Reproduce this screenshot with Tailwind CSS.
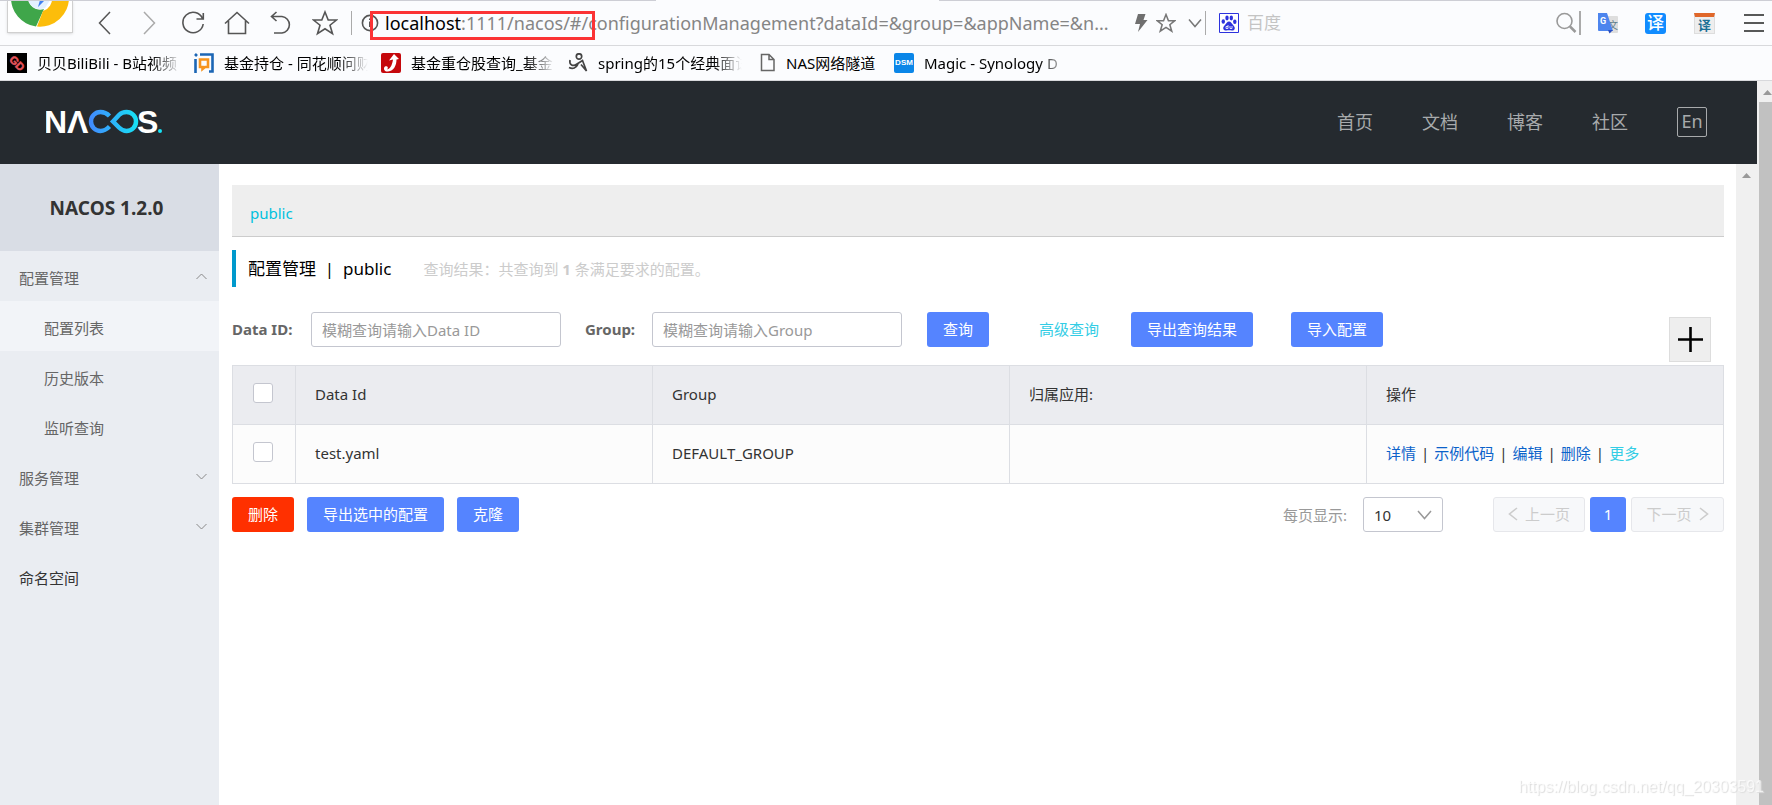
<!DOCTYPE html>
<html lang="zh-CN">
<head>
<meta charset="utf-8">
<title>Nacos</title>
<script src="https://cdn.jsdelivr.net/npm/@tailwindcss/browser@4"></script>
</head>
<body class="flex min-h-screen flex-col bg-white font-['Noto_Sans','Noto_Sans_CJK_SC',sans-serif] text-[15px] leading-5 text-[#333]">

<!-- Browser toolbar -->
<div class="relative flex h-[46px] shrink-0 items-center border-b border-[#d8d9dc] bg-[#fbfcfe] pt-px pr-2">
  <div class="absolute top-0 left-0 h-px w-[37%] bg-[#cdced5]"></div>
  <div class="absolute top-0 right-0 h-px w-[47%] bg-[#cdced5]"></div>
  <div class="ml-[7px] h-8 w-[66px] shrink-0 self-start border border-t-0 border-[#d0d0d0] bg-white shadow-sm">
    <svg class="mx-auto block" width="62" height="29" viewBox="0 0 62 29">
      <path d="M2 -4A29 29 0 0 0 27 25.500L35 8A12 12 0 0 1 19 -4Z" fill="#3fa64a"/>
      <path d="M28 25.500A29 29 0 0 0 60 -4H43A13 13 0 0 1 34 10Z" fill="#fcbd0b"/>
      <path d="M19 -4A12 12 0 0 0 36 7L43 -4Z" fill="#e4f1ff"/>
      <path d="M26 -2L31 -1L29 6L39 -4Z" fill="#3f7ff0"/>
    </svg>
  </div>
  <div class="ml-[10px] flex shrink-0 items-center text-[#555]">
    <button aria-label="后退" class="flex w-11 justify-center"><svg width="14" height="24" viewBox="0 0 14 24" fill="none" stroke="currentColor" stroke-width="1.500"><path d="M12 1L1.500 12L12 23"/></svg></button>
    <button aria-label="前进" class="flex w-11 justify-center text-[#aaa]"><svg width="14" height="24" viewBox="0 0 14 24" fill="none" stroke="currentColor" stroke-width="1.500"><path d="M2 1L12.500 12L2 23"/></svg></button>
    <button aria-label="刷新" class="flex w-11 justify-center"><svg width="24" height="24" viewBox="0 0 24 24" fill="none" stroke="currentColor" stroke-width="1.600"><path d="M21.500 7.500A10.200 10.200 0 1 0 22.200 13M22.300 2V8H15.500"/></svg></button>
    <button aria-label="主页" class="flex w-11 justify-center"><svg width="26" height="24" viewBox="0 0 26 24" fill="none" stroke="currentColor" stroke-width="1.600"><path d="M1 12.500L13 1.500L25 12.500M4.500 10V22.500H21.500V10"/></svg></button>
    <button aria-label="恢复" class="flex w-11 justify-center"><svg width="22" height="24" viewBox="0 0 22 24" fill="none" stroke="currentColor" stroke-width="1.600"><path d="M6.500 1L1.500 5.500L6.500 10M1.500 5.500H12A8.300 8.300 0 0 1 12 22H4"/></svg></button>
    <button aria-label="收藏" class="flex w-11 justify-center"><svg width="26" height="26" viewBox="0 0 26 26" fill="none" stroke="currentColor" stroke-width="1.600"><path d="M13 2L16.200 10H24.500L18 15.200L20.500 23.700L13 18.800L5.500 23.700L8 15.200L1.500 10H9.800Z"/></svg></button>
  </div>
  <div class="ml-1 h-6 w-px shrink-0 bg-[#aaa]"></div>
  <div class="relative ml-[9px] flex w-[841px] shrink-0 items-center">
    <svg class="shrink-0 text-[#555]" width="18" height="18" viewBox="0 0 18 18" fill="none" stroke="currentColor" stroke-width="1.600"><circle cx="9" cy="9" r="7.600"/><path d="M9 7.500V13M9 4.500V6" stroke-width="2"/></svg>
    <div role="textbox" aria-label="地址栏" contenteditable="true" class="ml-[6px] text-[18px] leading-7 whitespace-nowrap text-[#858585]"><span class="text-black">localhost</span>:1111/nacos/#/configurationManagement?dataId=&amp;group=&amp;appName=&amp;n...</div>
    <div class="pointer-events-none absolute top-[2px] left-[9px] h-[29px] w-[225px] border-3 border-[#fb3335]"></div>
    <div class="ml-auto flex items-center gap-2">
      <svg width="14" height="20" viewBox="0 0 14 20" fill="#6f6f6f"><path d="M4 1H11.500L9.500 7H13.500L4 19L6 11H1Z"/></svg>
      <button aria-label="加入收藏"><svg width="20" height="20" viewBox="0 0 26 26" fill="none" stroke="#777" stroke-width="2"><path d="M13 2L16.200 10H24.500L18 15.200L20.500 23.700L13 18.800L5.500 23.700L8 15.200L1.500 10H9.800Z"/></svg></button>
      <button aria-label="历史地址" class="pl-1"><svg width="14" height="10" viewBox="0 0 14 10" fill="none" stroke="#777" stroke-width="1.500"><path d="M1 1.500L7 8.500L13 1.500"/></svg></button>
    </div>
  </div>
  <div class="ml-[3px] h-6 w-px shrink-0 bg-[#aaa]"></div>
  <svg class="ml-[13px] shrink-0" width="20" height="20" viewBox="0 0 20 20"><path d="M.5 .5H19.500V19.500H.5Z" fill="#fff" stroke="#2d32dd"/><g fill="#2d32dd"><ellipse cx="4.300" cy="8.500" rx="1.700" ry="2.300"/><ellipse cx="8" cy="5" rx="1.700" ry="2.400"/><ellipse cx="12.300" cy="5" rx="1.700" ry="2.400"/><ellipse cx="15.800" cy="8.800" rx="1.700" ry="2.300"/><path d="M10 8.500C12 8.500 12.500 10.500 14.500 12.500C17 15 15.500 18 13 17.500C10.500 17 9.500 17 7.500 17.500C4.500 18 3 15 5.500 12.500C7.500 10.500 8 8.500 10 8.500Z"/></g><path d="M9 12V15.500H7V13.500H9M11 13V15.500H13V13" fill="none" stroke="#fff" stroke-width=".8"/></svg>
  <input aria-label="搜索" placeholder="百度" class="ml-2 min-w-0 flex-1 bg-transparent text-[17px] leading-7 outline-none placeholder:text-[#c4c4c4]">
  <button aria-label="开始搜索"><svg width="22" height="22" viewBox="0 0 22 22" fill="none" stroke="#999" stroke-width="1.600"><circle cx="9.500" cy="9" r="7.500"/><path d="M15 14.500L20.500 20" stroke-width="2.500"/></svg></button>
  <div class="ml-[2px] h-6 w-[2px] bg-[#aaa]"></div>
  <button aria-label="谷歌翻译" class="ml-4"><svg width="22" height="22" viewBox="0 0 22 22"><path d="M8 4H20Q21 4 21 5V20Q21 21 20 21H12Z" fill="#dedede"/><text x="11" y="17" font-size="10" fill="#607d8b" font-family="Noto Sans CJK SC">文</text><path d="M1 1H10L16 19H2Q1 19 1 18Z" fill="#4d85ee"/><path d="M11 18H16L12.500 21.500Z" fill="#2a4fc0"/><text x="3" y="12" font-size="9" font-weight="700" fill="#fff" font-family="Roboto">G</text></svg></button>
  <button aria-label="翻译" class="ml-[26px] h-[21px] w-[21px] rounded-[3px] bg-[#118cff] text-[17px] leading-[20px] font-medium text-white">译</button>
  <button aria-label="网页翻译" class="ml-7 flex h-[21px] w-[21px] items-center justify-center border border-t-4 border-[#ddd] border-t-[#e0672a] bg-[#eee] text-[13px] leading-4 font-bold text-[#1d7096]">译</button>
  <button aria-label="菜单" class="ml-[29px]"><svg width="20" height="20" viewBox="0 0 20 20" stroke="#222" stroke-width="1.600"><path d="M0 2H20M0 10H20M0 18H20"/></svg></button>
</div>

<!-- Bookmarks -->
<nav class="flex h-[35px] shrink-0 items-center border-b border-[#d8d9dc] bg-[#fbfcfe] px-[7px] text-black">
  <a href="#" class="flex w-[187px] items-center gap-[10px]">
    <svg class="shrink-0" width="20" height="20" viewBox="0 0 20 20"><path d="M0 0H20V20H0Z" fill="#000"/><text x="-8" y="4" transform="translate(10 10) rotate(45)" font-size="11" font-weight="700" fill="#e8545c" stroke="#e8545c" stroke-width=".5" font-family="Liberation Sans">GD</text></svg>
    <span class="w-[144px] overflow-hidden mask-r-from-80% whitespace-nowrap">贝贝BiliBili - B站视频</span></a>
  <a href="#" class="flex w-[187px] items-center gap-[10px]">
    <svg class="shrink-0" width="20" height="20" viewBox="0 0 20 20" fill="none"><path d="M1.500 6V20M6 1.500H18.500V18.500H15M1 1L3 3" stroke="#1c66b5" stroke-width="2.600"/><path d="M6 6.500H14V14H11L8.500 16V14H6Z" stroke="#f7941d" stroke-width="2.600"/></svg>
    <span class="w-[144px] overflow-hidden mask-r-from-80% whitespace-nowrap">基金持仓 - 同花顺问财</span></a>
  <a href="#" class="flex w-[187px] items-center gap-[10px]">
    <svg class="shrink-0" width="20" height="20" viewBox="0 0 20 20"><rect width="20" height="20" rx="2" fill="#c5080c"/><path d="M13 1L18 6L15.500 6.500C15.500 12 13 18 7 18.500C3 19 2 15 4 13.500C6 12.500 8 14.500 6 16.500C10 16 11.500 10 12 6.500L8 7.500Z" fill="#fff"/></svg>
    <span class="w-[144px] overflow-hidden mask-r-from-80% whitespace-nowrap">基金重仓股查询_基金</span></a>
  <a href="#" class="flex w-[189px] items-center gap-[10px]">
    <svg class="shrink-0" width="20" height="20" viewBox="0 0 20 20" fill="none" stroke="#444" stroke-width="1.700"><circle cx="11" cy="3.500" r="2.700"/><path d="M2 7C1 12 5 14 9 11L14.500 7.500L18.500 18L13 11.500M1 14.500C5 16.500 8 15 10 11"/></svg>
    <span class="w-[144px] overflow-hidden mask-r-from-80% whitespace-nowrap">spring的15个经典面试</span></a>
  <a href="#" class="flex w-[137px] items-center gap-[10px] pl-[3px]">
    <svg class="shrink-0" width="16" height="20" viewBox="0 0 16 20" fill="none" stroke="#666" stroke-width="1.500"><path d="M1.500 1.500H9L14 6.500V17.500H1.500ZM9 1.500V6.500H14"/></svg>
    <span class="whitespace-nowrap">NAS网络隧道</span></a>
  <a href="#" class="flex items-center gap-[10px]">
    <span class="flex h-5 w-5 shrink-0 justify-center rounded-[2px] bg-[#0a86e8] font-['Liberation_Sans',sans-serif] text-[8px] leading-5 font-bold text-white">DSM</span>
    <span class="w-[144px] overflow-hidden mask-r-from-80% whitespace-nowrap">Magic - Synology D</span></a>
</nav>

<div class="flex flex-1">
  <div class="flex min-w-0 flex-1 flex-col">
    <!-- Site header -->
    <header class="flex h-[83px] shrink-0 items-center bg-[#252a2f] pr-[50px] pl-[46px]">
      <a href="#" aria-label="Nacos" class="block pb-1">
        <svg width="118" height="26" viewBox="0 0 118 26">
          <defs><linearGradient id="wave" x1="43" x2="92" y1="0" y2="0" gradientUnits="userSpaceOnUse"><stop stop-color="#4289ff"/><stop offset="1" stop-color="#16e2f5"/></linearGradient></defs>
          <g fill="#fff" font-family="Liberation Sans" font-weight="700" font-size="32"><text x="-2" y="25">N</text><text x="21" y="25">Λ</text><text x="91" y="25">S</text></g>
          <path d="M63.500 8C60 4.500 58 4 54.500 4A9.500 9.500 0 0 0 54.500 23C58 23 60 22 63.500 18.500M67 13.500L73 7C75.500 4.500 77 4 80.500 4A9.500 9.500 0 0 1 80.500 23C77 23 75.500 22 73 19.500Z" fill="none" stroke="url(#wave)" stroke-width="4.500"/>
          <circle cx="114" cy="23" r="2" fill="#16e2f5"/>
        </svg>
      </a>
      <nav class="ml-auto flex items-center gap-[49px] pb-[2px] text-[18px] leading-7 text-[#a8aaac]">
        <a href="#">首页</a><a href="#">文档</a><a href="#">博客</a><a href="#">社区</a>
        <button class="flex h-[30px] w-[30px] items-center justify-center rounded-[2px] border border-[#a8aaac] pb-[2px]">En</button>
      </nav>
    </header>

    <div class="flex flex-1">
      <!-- Side menu -->
      <aside class="w-[219px] shrink-0 bg-[#eaedf2] text-[#666]">
        <h1 class="flex h-[87px] items-center justify-center bg-[#d9dde5] pr-[6px] text-[19px] font-bold text-[#333]">NACOS 1.2.0</h1>
        <nav>
          <button class="flex h-[50px] w-full items-center justify-between pt-1 pr-3 pl-[19px]">配置管理<svg class="mb-1" width="11" height="7" viewBox="0 0 11 7" fill="none" stroke="#888"><path d="M.5 6L5.500 1L10.500 6"/></svg></button>
          <a href="#" class="flex h-[50px] items-center bg-[#f2f4f8] pt-1 pl-11">配置列表</a>
          <a href="#" class="flex h-[50px] items-center pt-1 pl-11">历史版本</a>
          <a href="#" class="flex h-[50px] items-center pt-1 pl-11">监听查询</a>
          <button class="flex h-[50px] w-full items-center justify-between pt-1 pr-3 pl-[19px]">服务管理<svg class="mb-1" width="11" height="7" viewBox="0 0 11 7" fill="none" stroke="#888"><path d="M.5 1L5.500 6L10.500 1"/></svg></button>
          <button class="flex h-[50px] w-full items-center justify-between pt-1 pr-3 pl-[19px]">集群管理<svg class="mb-1" width="11" height="7" viewBox="0 0 11 7" fill="none" stroke="#888"><path d="M.5 1L5.500 6L10.500 1"/></svg></button>
          <a href="#" class="flex h-[50px] items-center pt-1 pl-[19px] text-[#333]">命名空间</a>
        </nav>
      </aside>

      <!-- Configuration list -->
      <main class="min-w-0 flex-1 px-3 pt-[21px] pl-[13px]">
        <div class="flex h-[52px] items-center border-b border-[#ccc] bg-[#eee] px-[18px] pt-1"><a href="#" class="text-[#00c1de]">public</a></div>
        <div class="mt-[13px] flex h-[37px] items-center border-l-4 border-[#09c] pl-3">
          <h2 class="text-[17px] whitespace-pre text-black">配置管理  |  public</h2>
          <p class="ml-8 text-[#ccc]">查询结果：共查询到 <strong>1</strong> 条满足要求的配置。</p>
        </div>
        <form class="mt-[25px] flex items-start text-[#666]">
          <label for="dataId" class="w-[79px] leading-[35px] font-bold">Data ID:</label>
          <input id="dataId" placeholder="模糊查询请输入Data ID" class="h-[35px] w-[250px] rounded-[3px] border border-[#c4c6cf] px-[10px] placeholder:text-[#999]">
          <label for="group" class="ml-6 w-[67px] leading-[35px] font-bold">Group:</label>
          <input id="group" placeholder="模糊查询请输入Group" class="h-[35px] w-[250px] rounded-[3px] border border-[#c4c6cf] px-[10px] placeholder:text-[#999]">
          <button type="button" class="ml-[25px] h-[35px] rounded-[3px] bg-[#5584ff] px-4 pb-[2px] text-white">查询</button>
          <a href="#" class="ml-[50px] leading-[34px] text-[#33cde5]">高级查询</a>
          <button type="button" class="ml-8 h-[35px] rounded-[3px] bg-[#5584ff] px-4 pb-[2px] text-white">导出查询结果</button>
          <button type="button" class="ml-[38px] h-[35px] rounded-[3px] bg-[#5584ff] px-4 pb-[2px] text-white">导入配置</button>
          <button type="button" aria-label="新建配置" class="mt-[5px] mr-[13px] ml-auto flex h-[45px] w-[42px] items-center justify-center border border-[#ddd] bg-[#eee]"><svg width="25" height="25" viewBox="0 0 25 25" stroke="#000" stroke-width="2.600"><path d="M0 12.500H25M12.500 0V25"/></svg></button>
        </form>
        <table class="mt-[3px] w-full table-fixed border-collapse border border-[#dcdee3] text-left">
          <colgroup><col class="w-[63px]"><col><col><col><col></colgroup>
          <thead class="bg-[#ebecf0]">
            <tr class="h-[59px]">
              <th class="border border-[#dcdee3] pr-[2px]"><input type="checkbox" aria-label="全选" class="mx-auto mb-1 block h-5 w-5 appearance-none rounded-[3px] border border-[#c4c6cf] bg-white"></th>
              <th class="border border-[#dcdee3] px-[19px] pb-[2px] font-normal">Data Id</th>
              <th class="border border-[#dcdee3] px-[19px] pb-[2px] font-normal">Group</th>
              <th class="border border-[#dcdee3] px-[19px] pb-[2px] font-normal">归属应用:</th>
              <th class="border border-[#dcdee3] px-[19px] pb-[2px] font-normal">操作</th>
            </tr>
          </thead>
          <tbody class="bg-[#fcfcfc]">
            <tr class="h-[59px]">
              <td class="border border-[#dcdee3] pr-[2px]"><input type="checkbox" aria-label="选择 test.yaml" class="mx-auto mb-1 block h-5 w-5 appearance-none rounded-[3px] border border-[#c4c6cf] bg-white"></td>
              <td class="border border-[#dcdee3] px-[19px] pb-[2px]">test.yaml</td>
              <td class="border border-[#dcdee3] px-[19px] pb-[2px]">DEFAULT_GROUP</td>
              <td class="border border-[#dcdee3] px-[19px] pb-[2px]"></td>
              <td class="border border-[#dcdee3] px-[19px] pb-[2px]"><div class="flex gap-[5px] text-[#0b62ca]"><a href="#">详情</a><span class="text-[#333]">|</span><a href="#">示例代码</a><span class="text-[#333]">|</span><a href="#">编辑</a><span class="text-[#333]">|</span><a href="#">删除</a><span class="text-[#333]">|</span><a href="#" class="text-[#33cde5]">更多</a></div></td>
            </tr>
          </tbody>
        </table>
        <div class="mt-[13px] flex items-center">
          <button class="h-[35px] rounded-[3px] bg-[#ff3000] px-4 pb-[2px] text-white">删除</button>
          <button class="ml-[13px] h-[35px] rounded-[3px] bg-[#5584ff] px-4 pb-[2px] text-white">导出选中的配置</button>
          <button class="ml-[13px] h-[35px] rounded-[3px] bg-[#5584ff] px-4 pb-[2px] text-white">克隆</button>
          <label for="pageSize" class="ml-auto w-20 text-[#999]">每页显示:</label>
          <div class="relative">
            <select id="pageSize" class="block h-[35px] w-20 appearance-none rounded-[3px] border border-[#c4c6cf] bg-white px-[10px]"><option>10</option><option>20</option></select>
            <svg class="pointer-events-none absolute top-[13px] right-[11px]" width="15" height="10" viewBox="0 0 15 10" fill="none" stroke="#999" stroke-width="1.500"><path d="M1 1L7.500 8.500L14 1"/></svg>
          </div>
          <div class="ml-[50px] flex gap-[5px] text-[#ccc]">
            <button disabled class="flex h-[35px] w-[92px] items-center justify-center gap-[7px] rounded-[3px] border border-[#e6e7eb] bg-[#f7f8fa] pb-[2px]"><svg width="10" height="14" viewBox="0 0 10 14" fill="none" stroke="currentColor" stroke-width="1.600"><path d="M9 1L1.500 7L9 13"/></svg>上一页</button>
            <button class="h-[35px] w-9 rounded-[3px] bg-[#5584ff] pb-[2px] text-white">1</button>
            <button disabled class="flex h-[35px] w-[93px] items-center justify-center gap-[7px] rounded-[3px] border border-[#e6e7eb] bg-[#f7f8fa] pb-[2px]">下一页<svg width="10" height="14" viewBox="0 0 10 14" fill="none" stroke="currentColor" stroke-width="1.600"><path d="M1 1L8.500 7L1 13"/></svg></button>
          </div>
        </div>
      </main>
      <div class="w-[21px] shrink-0 bg-[#f0f0f0] pt-[9px] pl-[6px]"><svg width="9" height="5" viewBox="0 0 9 5" fill="#999"><path d="M0 5L4.500 0L9 5Z"/></svg></div>
    </div>
  </div>
  <div class="flex w-[15px] shrink-0 flex-col bg-[#f0f0f0] pl-[2px]">
    <svg class="mt-[9px] ml-1" width="9" height="5" viewBox="0 0 9 5" fill="#999"><path d="M0 5L4.500 0L9 5Z"/></svg>
    <div class="mt-[7px] flex-1 bg-[#c1c1c1]"></div>
  </div>
</div>

<div class="pointer-events-none fixed right-2 bottom-2 font-['Liberation_Sans',sans-serif] text-[16px] leading-5 text-white/70 [text-shadow:1px_1px_1px_#ddd]">https://blog.csdn.net/qq_20303591</div>
</body>
</html>
